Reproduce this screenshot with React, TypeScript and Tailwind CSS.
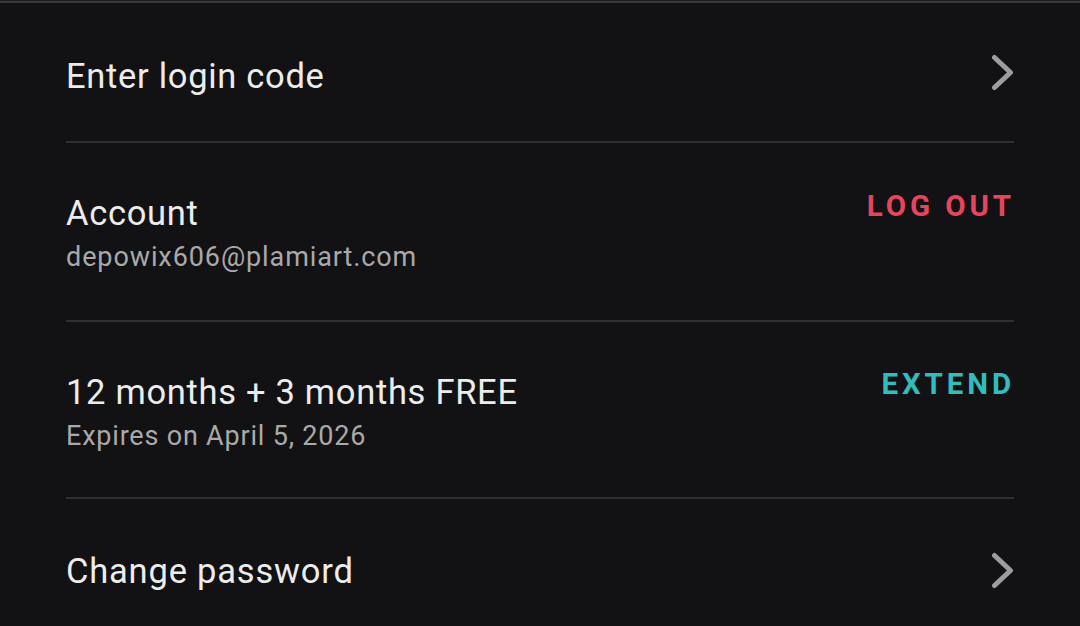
const Chevron = ({className = ''}: { className?: string }) => (
    <svg width="26" height="40" viewBox="0 0 26 40" fill="none" className={`shrink-0 ${className}`}>
        <path d="M6.5 3.5 L22.5 18.5 L6.5 33.5" stroke="#9d9d9f" strokeWidth="5" strokeLinecap="round" strokeLinejoin="round"/>
    </svg>
);

export default function App() {
    return (
        <div className="w-[1080px] h-[626px] overflow-hidden bg-[#121214] [font-family:'Roboto',sans-serif]">
            <div className="h-px bg-[#1c1c1e]"/>
            <div className="h-[2px] bg-[#38383a]"/>

            <div className="flex flex-col px-[66px]">
                {/* login code */}
                <div className="flex items-start justify-between pt-[53px] pb-[45px] border-b-2 border-[#303032]">
                    <div className="text-[34.5px] leading-[40px] tracking-[0.7px] text-[#ececec]">Enter login code</div>
                    <Chevron className="-mt-[2px]"/>
                </div>

                {/* account */}
                <div className="flex items-start justify-between pt-[47px] pb-[47px] border-b-2 border-[#303032]">
                    <div className="flex flex-col gap-2 mt-[3px]">
                        <div className="text-[34.5px] leading-[40px] tracking-[0.7px] text-[#ececec]">Account</div>
                        <div className="text-[27px] leading-[32px] tracking-[0.9px] text-[#a9a9ab]">depowix606@plamiart.com</div>
                    </div>
                    <button className="text-[29.5px] leading-[32px] font-bold tracking-[3.9px] text-[#e5465e] -mr-[1px]">
                        LOG OUT
                    </button>
                </div>

                {/* subscription */}
                <div className="flex items-start justify-between pt-[46px] pb-[45px] border-b-2 border-[#303032]">
                    <div className="flex flex-col gap-2 mt-[4px]">
                        <div className="text-[34.5px] leading-[40px] tracking-[0.7px] text-[#ececec]">12 months + 3 months FREE</div>
                        <div className="text-[27px] leading-[32px] tracking-[0.8px] text-[#a9a9ab]">Expires on April 5, 2026</div>
                    </div>
                    <button className="text-[29.5px] leading-[32px] font-bold tracking-[3.9px] text-[#33bcbc] -mr-[1px]">
                        EXTEND
                    </button>
                </div>

                {/* password */}
                <div className="flex items-start justify-between pt-[52px] pb-[36px]">
                    <div className="text-[34.5px] leading-[40px] tracking-[0.8px] text-[#ececec]">Change password</div>
                    <Chevron className="mt-[1px]"/>
                </div>
            </div>
        </div>
    );
}
